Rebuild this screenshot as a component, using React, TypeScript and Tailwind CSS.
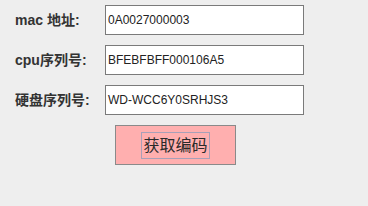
import React from "react";

const rows = [
  { label: "mac 地址:", value: "0A0027000003" },
  { label: "cpu序列号:", value: "BFEBFBFF000106A5" },
  { label: "硬盘序列号:", value: "WD-WCC6Y0SRHJS3" },
];

export default function App() {
  return (
    <div
      className="w-[368px] h-[206px] bg-[#eeeeee] flex flex-col pt-[5px] pl-[15px]"
      style={{ fontFamily: '"Liberation Sans", "Noto Sans CJK SC", sans-serif' }}
    >
      <div className="flex flex-col gap-[10px]">
        {rows.map((r) => (
          <div key={r.label} className="flex items-center">
            <div className="w-[90px] text-[14px] font-bold text-[#333333] leading-none">{r.label}</div>
            <div className="w-[199px] h-[30px] bg-white border border-[#7a7a7a] flex items-center pl-[2px] text-[12px] text-[#222222]">
              {r.value}
            </div>
          </div>
        ))}
      </div>
      <div className="mt-[10px] ml-[100px] w-[121px] h-[40px] bg-[#ffafaf] border border-[#8a8a8a] flex items-center justify-center">
        <span className="border border-[#a8a0b8] px-[1px] text-[16px] leading-[25px] text-[#2a2a2a] font-normal">获取编码</span>
      </div>
    </div>
  );
}
